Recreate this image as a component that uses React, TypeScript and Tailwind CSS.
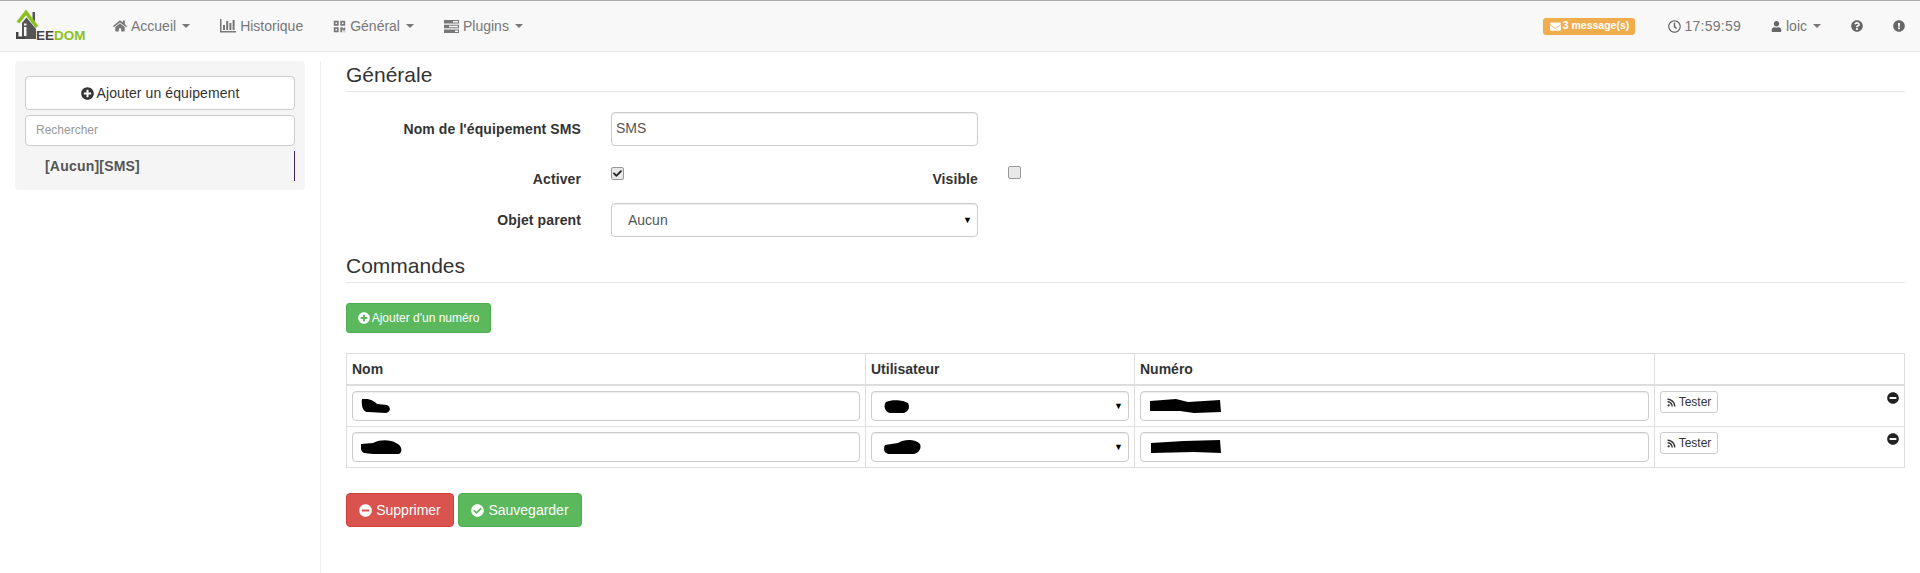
import React from "react";
import { FaHome, FaQrcode, FaEnvelope, FaRegClock, FaUser, FaQuestionCircle, FaExclamationCircle, FaPlusCircle, FaMinusCircle, FaCheckCircle, FaRss, FaCheck } from "react-icons/fa";

function Caret() {
  return <span className="ml-[6px] inline-block h-0 w-0 border-x-[4px] border-t-[4px] border-x-transparent border-t-[#777]" />;
}

function NavLink({ icon, label, caret }: { icon: React.ReactNode; label: string; caret?: boolean }) {
  return (
    <div className="flex items-center px-[15px] text-[14px] text-[#777]">
      <span className="mr-[4px] flex">{icon}</span>
      {label}
      {caret && <Caret />}
    </div>
  );
}

function ChartIcon() {
  return (
    <svg width="16" height="14" viewBox="0 0 16 14">
      <path d="M0 0 H1.500 V12 H16 V13.500 H0 Z" fill="#777" />
      <rect x="3" y="6" width="2" height="5" fill="#777" />
      <rect x="6.200" y="2" width="2" height="9" fill="#777" />
      <rect x="9.400" y="4" width="2" height="7" fill="#777" />
      <rect x="12.600" y="1" width="2" height="10" fill="#777" />
    </svg>
  );
}

function TasksIcon() {
  return (
    <svg width="15" height="13" viewBox="0 0 15 13">
      <path d="M0 0 H15 V3.500 H0 Z M0 4.700 H15 V8.200 H0 Z M0 9.400 H15 V13 H0 Z" fill="#777" />
      <path d="M9 1 H14 V2.500 H9 Z M5 5.700 H14 V7.200 H5 Z M11 10.400 H14 V12 H11 Z" fill="#f8f8f8" />
    </svg>
  );
}

function Logo() {
  return (
    <div className="relative ml-[15px] h-[38px] w-[83px] shrink-0">
      <svg width="26" height="34" viewBox="0 0 26 34" className="absolute left-0 top-0">
        <rect x="17.500" y="5" width="2.500" height="9" fill="#555" />
        <path d="M7 16 L11.500 10.500 L21 22 L21 32 L7 32 Z" fill="#555" />
        <path d="M3 15.500 L11 5.500 L22 20" fill="none" stroke="#8cc21f" strokeWidth="3.600" />
        <rect x="9" y="20" width="2.500" height="9" fill="#f8f8f8" />
        <rect x="9" y="16.500" width="2.500" height="2" fill="#f8f8f8" />
        <path d="M1 25 H3.500 V29.500 H10 V32 H1 Z" fill="#444" />
      </svg>
      <div className="absolute left-[21px] top-[22px] text-[13.500px] leading-[14px] font-bold">
        <span className="text-[#444]">EE</span>
        <span className="text-[#8cc21f]">DOM</span>
      </div>
    </div>
  );
}

function Box({ className, children }: { className: string; children?: React.ReactNode }) {
  return (
    <div className={"flex items-center rounded-[4px] border border-[#ccc] bg-white text-[14px] text-[#555] shadow-[inset_0_1px_1px_rgba(0,0,0,0.075)] " + className}>
      {children}
    </div>
  );
}

function Arrow() {
  return <span className="ml-auto mr-[5px] text-[9px] leading-none text-black">▼</span>;
}

function Scribble({ d, width }: { d: string; width: number }) {
  return (
    <svg width={width} height="14" viewBox={`0 0 ${width} 14`} className="shrink-0">
      <path d={d} fill="#000" />
    </svg>
  );
}

function Heading({ title }: { title: string }) {
  return <div className="border-b border-[#e5e5e5] pb-[3px] text-[21px] leading-[27px] text-[#333]">{title}</div>;
}

function Label({ children, className }: { children: React.ReactNode; className: string }) {
  return <div className={"text-right text-[14px] font-bold tracking-[0.1px] text-[#333] " + className}>{children}</div>;
}

function CheckBox({ checked }: { checked?: boolean }) {
  return (
    <span className="flex h-[13px] w-[13px] shrink-0 items-center justify-center rounded-[2px] border border-[#999] bg-[#e8e8e8]">
      {checked && <FaCheck className="text-[9px] text-[#222]" />}
    </span>
  );
}

function Row({ name, user, num }: { name: React.ReactNode; user: React.ReactNode; num: React.ReactNode }) {
  return (
    <div className="flex h-[41px] border-b border-[#ddd]">
      <div className="w-[519px] shrink-0 border-r border-[#ddd] px-[5px] pt-[5px]">
        <Box className="h-[30px] w-full pl-[8px]">{name}</Box>
      </div>
      <div className="w-[269px] shrink-0 border-r border-[#ddd] px-[5px] pt-[5px]">
        <Box className="h-[30px] w-full pl-[12px]">
          {user}
          <Arrow />
        </Box>
      </div>
      <div className="w-[520px] shrink-0 border-r border-[#ddd] px-[5px] pt-[5px]">
        <Box className="h-[30px] w-full pl-[9px]">{num}</Box>
      </div>
      <div className="flex flex-1 items-start justify-between pl-[5px] pr-[5px] pt-[5px]">
        <div className="flex h-[22px] w-[58px] items-center justify-center rounded-[3px] border border-[#ccc] bg-white text-[12px] text-[#333]">
          <FaRss className="mr-[3px] text-[9px]" />
          Tester
        </div>
        <FaMinusCircle className="mt-[1px] text-[12px] text-[#222]" />
      </div>
    </div>
  );
}

export default function App() {
  return (
    <div className="flex h-[573px] flex-col overflow-hidden bg-white font-['Liberation_Sans',Arial,sans-serif]">
      <header className="flex h-[52px] shrink-0 items-center border-y border-t-[#aaa] border-b-[#e7e7e7] bg-[#f8f8f8]">
        <Logo />
        <nav className="flex">
          <NavLink icon={<FaHome className="text-[14px]" />} label="Accueil" caret />
          <NavLink icon={<ChartIcon />} label="Historique" />
          <NavLink icon={<FaQrcode className="text-[13px]" />} label="Général" caret />
          <NavLink icon={<TasksIcon />} label="Plugins" caret />
        </nav>
        <div className="ml-auto flex items-center pr-[15px] text-[14px] text-[#777]">
          <span className="flex h-[17px] w-[92px] items-center justify-center rounded-[3px] bg-[#f0ad4e] text-[10.500px] font-bold text-white">
            <FaEnvelope className="mr-[2px] text-[11px]" />3 message(s)
          </span>
          <span className="ml-[33px] flex items-center tracking-[0.25px]">
            <FaRegClock className="mr-[3px] text-[13px] text-[#666]" />
            17:59:59
          </span>
          <span className="ml-[30px] flex items-center">
            <FaUser className="mr-[4px] text-[11px] text-[#666]" />
            loic
            <Caret />
          </span>
          <FaQuestionCircle className="ml-[30px] text-[12px] text-[#666]" />
          <FaExclamationCircle className="ml-[30px] text-[12px] text-[#666]" />
        </div>
      </header>

      <div className="flex flex-1 pt-[9px]">
        <div className="w-[321px] shrink-0 border-r border-[#eee] pl-[15px] pr-[15px]">
          <aside className="h-[129px] rounded-[4px] bg-[#f5f5f5] px-[10px] pt-[15px]">
            <div className="flex h-[34px] items-center justify-center rounded-[4px] border border-[#ccc] bg-white text-[14px] tracking-[0.1px] text-[#333]">
              <FaPlusCircle className="mr-[3px] text-[13px]" />
              Ajouter un équipement
            </div>
            <div className="mt-[5px] flex h-[31px] items-center rounded-[4px] border border-[#ccc] bg-white pb-[2px] pl-[10px] text-[12px] text-[#999]">
              Rechercher
            </div>
            <div className="mt-[5px] flex h-[30px] items-center border-r border-[#3f1f6f] pl-[20px] text-[14px] font-bold tracking-[0.2px] text-[#555]">
              [Aucun][SMS]
            </div>
          </aside>
        </div>

        <main className="flex-1 pl-[25px] pr-[15px]">
          <Heading title="Générale" />
          <div className="mt-[20px] flex h-[34px] items-center">
            <Label className="w-[235px]">Nom de l'équipement SMS</Label>
            <Box className="ml-[30px] h-[34px] w-[367px] pb-[2px] pl-[4px] text-[13px]">SMS</Box>
          </div>
          <div className="mt-[21px] flex h-[24px] items-start">
            <Label className="mt-[2px] w-[235px]">Activer</Label>
            <div className="ml-[30px] flex w-[367px] items-start justify-between">
              <CheckBox checked />
              <Label className="mt-[2px]">Visible</Label>
            </div>
            <div className="ml-[30px] mt-[-1px]">
              <CheckBox />
            </div>
          </div>
          <div className="mt-[12px] flex h-[34px] items-center">
            <Label className="w-[235px]">Objet parent</Label>
            <Box className="ml-[30px] h-[34px] w-[367px] pl-[16px]">
              Aucun
              <Arrow />
            </Box>
          </div>
          <div className="mt-[15px]">
            <Heading title="Commandes" />
          </div>
          <div className="mt-[20px] flex h-[30px] w-[145px] items-center justify-center rounded-[3px] border border-[#4cae4c] bg-[#5cb85c] text-[12px] text-white">
            <FaPlusCircle className="mr-[2px] text-[12px]" />
            Ajouter d'un numéro
          </div>
          <div className="mt-[20px] border-x border-t border-[#ddd]">
            <div className="flex h-[32px] border-b-[2px] border-[#ddd] text-[14px] font-bold text-[#333]">
              <div className="flex w-[519px] shrink-0 items-center border-r border-[#ddd] pl-[5px]">Nom</div>
              <div className="flex w-[269px] shrink-0 items-center border-r border-[#ddd] pl-[5px]">Utilisateur</div>
              <div className="flex w-[520px] shrink-0 items-center border-r border-[#ddd] pl-[5px]">Numéro</div>
              <div className="flex-1" />
            </div>
            <Row
              name={<Scribble width={30} d="M1 0 C7 -1 14 2 16 5 L26 6 C30 8 30 13 25 14 L7 13 C2 13 0 7 1 0 Z" />}
              user={<Scribble width={26} d="M2 3 C8 0 20 1 24 4 C26 8 25 12 20 14 L6 14 C1 13 -1 7 2 3 Z" />}
              num={<Scribble width={72} d="M0 2 L26 0 L38 3 L70 1 L71 13 L44 14 L30 12 L0 12 Z" />}
            />
            <Row
              name={<Scribble width={42} d="M0 4 L12 3 C20 -1 30 0 35 3 C41 5 42 12 38 14 L12 14 L3 13 C0 12 -1 7 0 4 Z" />}
              user={<Scribble width={37} d="M1 5 L14 3 C20 -1 32 -1 36 4 C38 9 34 14 28 14 L6 14 C0 14 -1 9 1 5 Z" />}
              num={<Scribble width={72} d="M1 3 L34 1 L70 0 L71 13 L44 12 L1 13 Z" />}
            />
          </div>
          <div className="mt-[25px] flex gap-[4px] text-[14px] text-white">
            <div className="flex h-[34px] w-[108px] items-center justify-center rounded-[4px] border border-[#d43f3a] bg-[#d9534f]">
              <FaMinusCircle className="mr-[4px] text-[13px]" />
              Supprimer
            </div>
            <div className="flex h-[34px] w-[124px] items-center justify-center rounded-[4px] border border-[#4cae4c] bg-[#5cb85c]">
              <FaCheckCircle className="mr-[4px] text-[13px]" />
              Sauvegarder
            </div>
          </div>
        </main>
      </div>
    </div>
  );
}
